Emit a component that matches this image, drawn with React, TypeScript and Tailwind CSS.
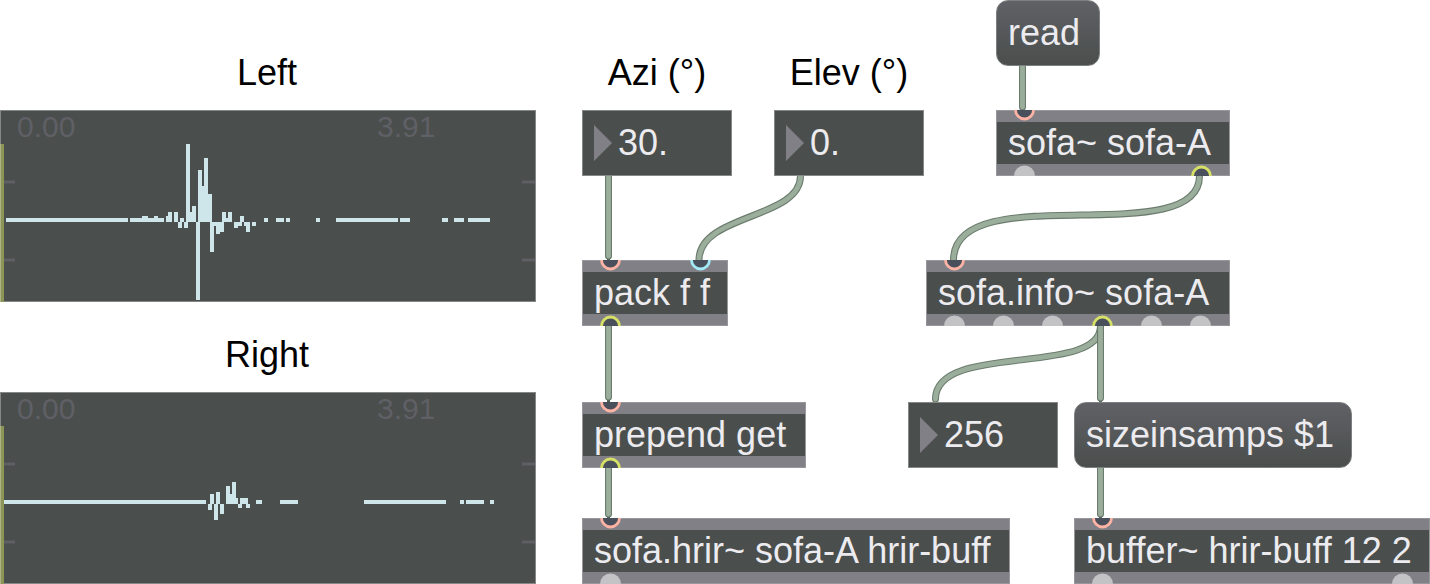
import React from "react";

type Bar = [x0: number, x1: number, y0: number, y1: number];

// Sample columns, measured from the top left corner of a scope; the zero line is at y = 112.
const leftBars: Bar[] = [
  [6, 128, 108, 112], [130, 164, 108, 112], [142, 148, 106, 112], [154, 158, 106, 112],
  [166, 168, 106, 112], [168, 172, 102, 112], [174, 178, 102, 112], [178, 182, 112, 118],
  [180, 184, 108, 112], [184, 188, 112, 118], [186, 190, 34, 112], [190, 192, 102, 112],
  [192, 196, 96, 112], [196, 200, 112, 190], [198, 202, 60, 112], [202, 204, 76, 112],
  [204, 208, 48, 112], [208, 212, 84, 112], [210, 214, 112, 142], [214, 216, 112, 116],
  [216, 220, 112, 124], [220, 224, 112, 122], [222, 226, 102, 112], [226, 228, 108, 112],
  [228, 232, 102, 112], [234, 238, 112, 118], [238, 242, 112, 116], [240, 244, 106, 112],
  [244, 246, 112, 116], [246, 250, 112, 122], [252, 256, 112, 116], [264, 268, 108, 112],
  [276, 284, 108, 112], [286, 290, 108, 112], [316, 320, 108, 112], [336, 398, 108, 112],
  [400, 410, 108, 112], [442, 448, 108, 112], [454, 464, 108, 112], [468, 490, 108, 112],
];

const rightBars: Bar[] = [
  [4, 206, 108, 112], [208, 212, 112, 118], [210, 214, 102, 112], [214, 218, 112, 128],
  [216, 220, 100, 112], [220, 224, 112, 122], [226, 230, 94, 112], [230, 232, 102, 112],
  [232, 236, 90, 112], [236, 238, 106, 112], [238, 242, 112, 116], [240, 248, 106, 112],
  [246, 250, 112, 116], [256, 262, 108, 112], [280, 298, 108, 112], [364, 446, 108, 112],
  [460, 464, 108, 112], [466, 484, 108, 112], [490, 494, 108, 112],
];

function Scope({ title, bars }: { title: string; bars: Bar[] }) {
  return (
    <figure>
      <figcaption className="mb-4 pr-0.5 text-center text-[36px] leading-[42px] text-black">{title}</figcaption>
      <div className="relative h-48 bg-[#4a4e4c]">
        <svg viewBox="0 0 536 192" className="block h-48 w-full" shapeRendering="crispEdges" aria-hidden="true">
          <g fill="#5f6066">
            <rect x="0" y="70" width="15" height="4" fillOpacity="0.45" />
            <rect x="0" y="71" width="15" height="2" />
            <rect x="0" y="148" width="15" height="4" fillOpacity="0.45" />
            <rect x="0" y="149" width="15" height="2" />
            <rect x="522" y="70" width="14" height="4" fillOpacity="0.45" />
            <rect x="522" y="71" width="14" height="2" />
            <rect x="522" y="148" width="14" height="4" fillOpacity="0.45" />
            <rect x="522" y="149" width="14" height="2" />
          </g>
          <rect x="0.5" y="0.5" width="535" height="191" fill="none" stroke="#868887" />
          <rect x="0" y="34" width="4" height="158" fill="#8c9555" />
          <rect x="0" y="34" width="1" height="158" fill="#adb388" />
          <g fill="#cee6ea">
            {bars.map(([x0, x1, y0, y1]) => (
              <rect key={`${x0}-${y1}`} x={x0} y={y0} width={x1 - x0} height={y1 - y0} />
            ))}
          </g>
        </svg>
        <div className="absolute inset-x-0 top-0 flex pl-[17px] text-[30px] leading-[34px] text-[#5f6066]">
          <span className="w-[360px]">0.00</span>
          <span>3.91</span>
        </div>
      </div>
    </figure>
  );
}

type PortKind = "plain" | "red" | "cyan" | "yellow";
type PortSpec = [offset: number, kind: PortKind];

const ring: Record<PortKind, string> = {
  plain: "#c3c3c5",
  red: "#ffb3a4",
  cyan: "#a2e8f6",
  yellow: "#d7e066",
};

function Port({ spec, outlet = false }: { spec: PortSpec; outlet?: boolean }) {
  const [offset, kind] = spec;
  const cy = outlet ? 11 : 0;
  return (
    <svg
      width="21"
      height="11"
      viewBox="0 0 21 11"
      className={outlet ? "absolute -bottom-px" : "absolute -top-px"}
      style={{ left: offset }}
      aria-hidden="true"
    >
      {kind === "plain" ? (
        <circle cx="10.5" cy={cy} r="10.5" fill={ring.plain} />
      ) : (
        <circle cx="10.5" cy={cy} r="9" fill="#4a505b" stroke={ring[kind]} strokeWidth="2.8" />
      )}
    </svg>
  );
}

function ObjectBox({ place, text, inlets, outlets }: { place: string; text: string; inlets: PortSpec[]; outlets: PortSpec[] }) {
  return (
    <div className={`absolute flex h-[66px] items-center border border-[#98989c] bg-[#808086] ${place}`}>
      <div className="flex h-[42px] w-full items-center bg-[#4a4e4c] pl-[11px] text-[36px] leading-[42px] whitespace-nowrap text-[#ecebef]">
        {text}
      </div>
      {inlets.map((p) => (
        <Port key={p[0]} spec={p} />
      ))}
      {outlets.map((p) => (
        <Port key={p[0]} spec={p} outlet />
      ))}
    </div>
  );
}

function NumberBox({ id, place, value, name }: { id: string; place: string; value: string; name?: string }) {
  return (
    <div className={`absolute flex h-[66px] w-[150px] items-center border border-[#868887] bg-[#4a4e4c] pl-[11px] ${place}`}>
      <svg width="18" height="36" viewBox="0 0 18 36" className="shrink-0" aria-hidden="true">
        <path d="M0 0L18 18L0 36Z" fill="#808086" />
      </svg>
      <input
        id={id}
        aria-label={name}
        defaultValue={value}
        inputMode="decimal"
        className="ml-1.5 h-[42px] w-full min-w-0 bg-transparent p-0 text-[36px] leading-[42px] text-[#ecebef] outline-none"
      />
    </div>
  );
}

function Message({ place, text }: { place: string; text: string }) {
  return (
    <button
      type="button"
      className={`absolute h-[66px] rounded-xl border border-[#7d8080] bg-linear-to-b from-[#606166] to-[#4a4e4c] pl-[11px] text-left text-[36px] leading-[42px] whitespace-nowrap text-[#ecebef] ${place}`}
    >
      {text}
    </button>
  );
}

const cables = [
  "M608.5 176V256",
  "M800.5 176C800.5 219 699 214 699 260",
  "M608.5 326V397",
  "M608.5 468V514",
  "M1022.5 66V107",
  "M1199.5 176C1199.5 252 953.5 176 953.5 260",
  "M1100.5 326C1100.5 377 935.5 342 935.5 399",
  "M1100.5 326V398",
  "M1100.5 468V514",
];

function Cables() {
  return (
    <svg className="pointer-events-none absolute top-0 left-0" width="1430" height="584" viewBox="0 0 1430 584" fill="none" aria-hidden="true">
      <g fill="#4d5b50">
        <rect x="607" y="258" width="3" height="3" />
        <rect x="607" y="400" width="3" height="3" />
        <rect x="607" y="516" width="3" height="3" />
        <rect x="1021" y="108" width="3" height="3" />
        <rect x="934" y="400" width="3" height="3" />
        <rect x="1099" y="400" width="3" height="3" />
        <rect x="1099" y="516" width="3" height="3" />
      </g>
      {cables.map((d) => (
        <g key={d}>
          <path d={d} stroke="#6b7c6e" strokeWidth="7" strokeLinecap={d.endsWith("260") ? "butt" : "round"} />
          <path d={d} stroke="#9aae9b" strokeWidth="4.8" strokeLinecap={d.endsWith("260") ? "butt" : "round"} />
        </g>
      ))}
    </svg>
  );
}

export default function App() {
  return (
    <main className="relative min-h-screen overflow-hidden bg-white font-['Liberation_Sans',Arial,sans-serif]">
      <section className="flex w-[536px] flex-col gap-8 pt-[52px]">
        <Scope title="Left" bars={leftBars} />
        <Scope title="Right" bars={rightBars} />
      </section>

      <Cables />

      <label htmlFor="azi" className="absolute top-[52px] left-[582px] w-[150px] text-center text-[36px] leading-[42px] text-black">
        Azi (°)
      </label>
      <label htmlFor="elev" className="absolute top-[52px] left-[774px] w-[150px] text-center text-[36px] leading-[42px] text-black">
        Elev (°)
      </label>
      <NumberBox id="azi" place="left-[582px] top-[110px]" value="30." />
      <NumberBox id="elev" place="left-[774px] top-[110px]" value="0." />
      <ObjectBox place="left-[582px] top-[260px] w-[146px]" text="pack f f" inlets={[[17, "red"], [107, "cyan"]]} outlets={[[17, "yellow"]]} />
      <ObjectBox place="left-[582px] top-[402px] w-[224px]" text="prepend get" inlets={[[17, "red"]]} outlets={[[17, "yellow"]]} />
      <ObjectBox place="left-[582px] top-[518px] w-[428px]" text="sofa.hrir~ sofa-A hrir-buff" inlets={[[17, "red"]]} outlets={[[17, "plain"]]} />

      <Message place="left-[996px] top-0 w-[104px]" text="read" />
      <ObjectBox place="left-[996px] top-[110px] w-[234px]" text="sofa~ sofa-A" inlets={[[17, "red"]]} outlets={[[17, "plain"], [194, "yellow"]]} />
      <ObjectBox
        place="left-[926px] top-[260px] w-[304px]"
        text="sofa.info~ sofa-A"
        inlets={[[17, "red"]]}
        outlets={[[17, "plain"], [66, "plain"], [115, "plain"], [165, "yellow"], [214, "plain"], [263, "plain"]]}
      />
      <NumberBox id="size" name="Size in samples" place="left-[908px] top-[402px]" value="256" />
      <Message place="left-[1074px] top-[402px] w-[278px]" text="sizeinsamps $1" />
      <ObjectBox place="left-[1074px] top-[518px] w-[356px]" text="buffer~ hrir-buff 12 2" inlets={[[17, "red"]]} outlets={[[17, "plain"], [317, "plain"]]} />
    </main>
  );
}
